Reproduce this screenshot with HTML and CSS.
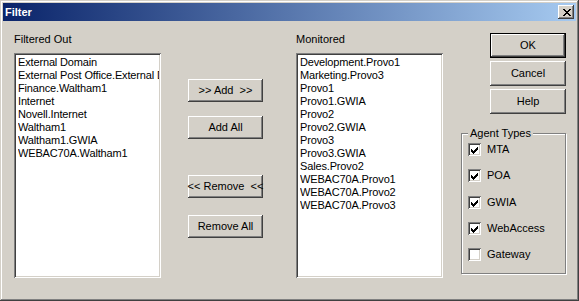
FILE: index.html
```html
<!DOCTYPE html>
<html lang="en">
<head>
    <meta charset="UTF-8">
    <title>Filter</title>
    <link rel="stylesheet" href="styles.css">
</head>
<body>
    <div class="window">
        <div class="titlebar">
            <span class="title">Filter</span>
            <span class="close-btn">
                <svg width="8" height="7" viewBox="0 0 8 7">
                    <path d="M0 0h2v1h-2z M6 0h2v1h-2z M1 1h2v1h-2z M5 1h2v1h-2z M2 2h4v1h-4z M3 3h2v1h-2z M2 4h4v1h-4z M1 5h2v1h-2z M5 5h2v1h-2z M0 6h2v1h-2z M6 6h2v1h-2z" fill="#000"/>
                </svg>
            </span>
        </div>

        <div class="client">
            <!-- Danh sach bi loc -->
            <div class="list-col">
                <div class="caption">Filtered Out</div>
                <div class="listbox">
                    <div class="item">External Domain</div>
                    <div class="item">External Post Office.External Domain</div>
                    <div class="item">Finance.Waltham1</div>
                    <div class="item">Internet</div>
                    <div class="item">Novell.Internet</div>
                    <div class="item">Waltham1</div>
                    <div class="item">Waltham1.GWIA</div>
                    <div class="item">WEBAC70A.Waltham1</div>
                </div>
            </div>

            <div class="move-col">
                <div class="btn btn-add">&gt;&gt; Add  &gt;&gt;</div>
                <div class="btn btn-addall">Add All</div>
                <div class="btn btn-remove">&lt;&lt; Remove  &lt;&lt;</div>
                <div class="btn btn-removeall">Remove All</div>
            </div>

            <!-- Danh sach dang theo doi -->
            <div class="list-col monitored">
                <div class="caption">Monitored</div>
                <div class="listbox">
                    <div class="item">Development.Provo1</div>
                    <div class="item">Marketing.Provo3</div>
                    <div class="item">Provo1</div>
                    <div class="item">Provo1.GWIA</div>
                    <div class="item">Provo2</div>
                    <div class="item">Provo2.GWIA</div>
                    <div class="item">Provo3</div>
                    <div class="item">Provo3.GWIA</div>
                    <div class="item">Sales.Provo2</div>
                    <div class="item">WEBAC70A.Provo1</div>
                    <div class="item">WEBAC70A.Provo2</div>
                    <div class="item">WEBAC70A.Provo3</div>
                </div>
            </div>

            <div class="side-col">
                <div class="btn btn-side btn-default">OK</div>
                <div class="btn btn-side">Cancel</div>
                <div class="btn btn-side">Help</div>

                <fieldset class="group">
                    <legend>Agent Types</legend>
                    <div class="check-row"><span class="checkbox checked"><svg width="9" height="9" viewBox="0 0 9 9"><path d="M1 4h1v3h-1z M2 5h1v3h-1z M3 6h1v3h-1z M4 5h1v3h-1z M5 4h1v3h-1z M6 3h1v3h-1z M7 2h1v3h-1z" fill="#000"/></svg></span>MTA</div>
                    <div class="check-row"><span class="checkbox checked"><svg width="9" height="9" viewBox="0 0 9 9"><path d="M1 4h1v3h-1z M2 5h1v3h-1z M3 6h1v3h-1z M4 5h1v3h-1z M5 4h1v3h-1z M6 3h1v3h-1z M7 2h1v3h-1z" fill="#000"/></svg></span>POA</div>
                    <div class="check-row"><span class="checkbox checked"><svg width="9" height="9" viewBox="0 0 9 9"><path d="M1 4h1v3h-1z M2 5h1v3h-1z M3 6h1v3h-1z M4 5h1v3h-1z M5 4h1v3h-1z M6 3h1v3h-1z M7 2h1v3h-1z" fill="#000"/></svg></span>GWIA</div>
                    <div class="check-row"><span class="checkbox checked"><svg width="9" height="9" viewBox="0 0 9 9"><path d="M1 4h1v3h-1z M2 5h1v3h-1z M3 6h1v3h-1z M4 5h1v3h-1z M5 4h1v3h-1z M6 3h1v3h-1z M7 2h1v3h-1z" fill="#000"/></svg></span>WebAccess</div>
                    <div class="check-row"><span class="checkbox"></span>Gateway</div>
                </fieldset>
            </div>
        </div>
    </div>
</body>
</html>
```

FILE: styles.css
```css
body {
    margin: 0;
    font-family: "Liberation Sans", Arial, sans-serif;
    font-size: 11px;
    line-height: 13px;
    color: #000;
    background: #d4d0c8;
}

/* Khung cua so */
.window {
    width: 579px;
    height: 301px;
    box-sizing: border-box;
    padding: 3px;
    background: #d4d0c8;
    box-shadow: inset -1px -1px #404040, inset 1px 1px #d4d0c8,
                inset -2px -2px #808080, inset 2px 2px #fff;
}

.titlebar {
    height: 18px;
    display: flex;
    align-items: center;
    justify-content: space-between;
    padding: 0 2px 0 2px;
    background: linear-gradient(to right, #0a246a, #a6caf0);
}

.title {
    color: #fff;
    font-weight: bold;
    line-height: 18px;
}

.close-btn {
    width: 16px;
    height: 14px;
    box-sizing: border-box;
    display: flex;
    align-items: center;
    justify-content: center;
    padding-left: 1px;
    background: #d4d0c8;
    box-shadow: inset -1px -1px #404040, inset 1px 1px #fff,
                inset -2px -2px #808080, inset 2px 2px #d4d0c8;
}

.client {
    display: flex;
    padding: 12px 0 0 11px;
}

/* Danh sach */
.list-col {
    width: 147px;
}

.list-col.monitored {
    margin-left: 33px;
}

.caption {
    height: 13px;
    margin-bottom: 7px;
}

.listbox {
    height: 225px;
    box-sizing: border-box;
    padding: 3px 2px 2px 4px;
    overflow: hidden;
    background: #fff;
    box-shadow: inset 1px 1px #808080, inset -1px -1px #fff,
                inset 2px 2px #404040, inset -2px -2px #d4d0c8;
}

.item {
    white-space: nowrap;
    overflow: hidden;
    letter-spacing: -0.15px;
}

/* Nut bam */
.btn {
    height: 23px;
    box-sizing: border-box;
    display: flex;
    align-items: center;
    justify-content: center;
    white-space: pre;
    background: #d4d0c8;
    box-shadow: inset -1px -1px #404040, inset 1px 1px #fff,
                inset -2px -2px #808080, inset 2px 2px #d4d0c8;
}

.move-col {
    width: 75px;
    margin-left: 27px;
    padding-top: 46px;
}

.btn-addall {
    margin-top: 14px;
}

.btn-remove {
    margin-top: 36px;
}

.btn-removeall {
    margin-top: 17px;
}

.side-col {
    width: 105px;
    margin-left: 18px;
    display: flex;
    flex-direction: column;
    align-items: flex-end;
}

.btn-side {
    width: 76px;
    height: 25px;
    margin-bottom: 3px;
}

.btn-default {
    border: 1px solid #000;
}

/* Nhom Agent Types */
.group {
    align-self: stretch;
    margin: 10px 0 0 0;
    padding: 3px 0 12px 6px;
    border: 1px solid #808080;
    box-shadow: 1px 1px 0 #fff, inset 1px 1px 0 #fff;
    min-width: 0;
}

.group legend {
    margin-left: 0;
    padding: 0 2px;
    background: #d4d0c8;
    line-height: 13px;
}

.check-row {
    display: flex;
    align-items: center;
    height: 13px;
    margin-bottom: 13px;
}

.check-row:nth-child(3) {
    margin-bottom: 14px;
}

.check-row:last-child {
    margin-bottom: 0;
}

.checkbox {
    width: 13px;
    height: 13px;
    box-sizing: border-box;
    padding: 2px;
    margin-right: 6px;
    background: #fff;
    box-shadow: inset 1px 1px #808080, inset -1px -1px #fff,
                inset 2px 2px #404040, inset -2px -2px #d4d0c8;
}

.checkbox svg {
    display: block;
}
```
